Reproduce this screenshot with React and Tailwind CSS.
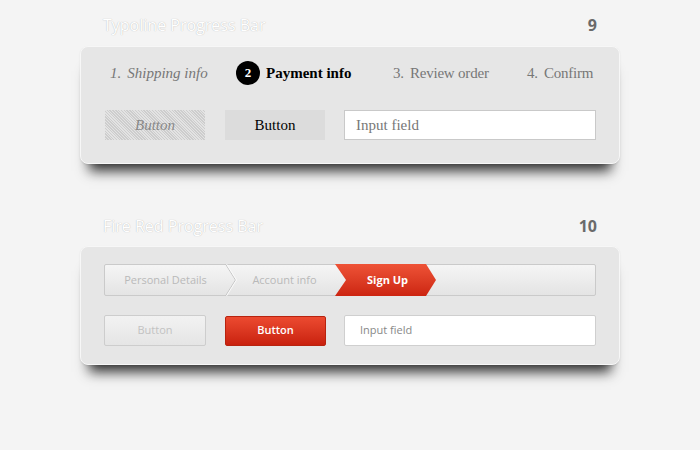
import React from "react";

const serif = "font-['Liberation_Serif',Georgia,serif]";
const sans = "font-['Open_Sans','DejaVu_Sans',sans-serif]";

function Title({ text, num }) {
  return (
    <div className={`flex items-center justify-between h-[18px] pl-[103px] pr-[103px] ${sans}`}>
      <span className="text-[16px] text-white [text-shadow:0_0_1px_rgba(0,0,0,0.3)]">{text}</span>
      <span className="text-[16px] font-bold text-[#6a6a6a]">{num}</span>
    </div>
  );
}

function Panel({ children, className = "" }) {
  return (
    <div
      className={`mx-[80px] rounded-[8px] bg-[#e6e6e6] border border-[#f7f7f7] shadow-[0_16px_12px_-9px_rgba(0,0,0,0.8),0_1px_2px_rgba(0,0,0,0.08)] ${className}`}
    >
      {children}
    </div>
  );
}

function Step({ n, label, className = "" }) {
  return (
    <span className={`flex items-baseline text-[#777] ${className}`}>
      <span className="mr-[6px]">{n}.</span>
      {label}
    </span>
  );
}

function TypolinePanel() {
  return (
    <Panel className="pt-[14px] pb-[23px]">
      <div className={`flex items-center pl-[29px] h-[24px] text-[15px] ${serif}`}>
        <Step n="1" label="Shipping info" className="w-[126px] italic" />
        <span className="w-[157px] flex items-center gap-[6px] text-black font-bold">
          <span className="w-[24px] h-[24px] rounded-full bg-black text-white text-[13px] flex items-center justify-center">
            2
          </span>
          Payment info
        </span>
        <Step n="3" label="Review order" className="w-[134px] tracking-[-0.2px]" />
        <Step n="4" label="Confirm" className="tracking-[-0.2px]" />
      </div>
      <div className={`flex items-center mt-[25px] pl-[24px] pr-[23px] ${serif}`}>
        <div className="w-[100px] h-[30px] flex items-center justify-center italic text-[15px] text-[#888] bg-[#d9d9d9] [background-image:repeating-linear-gradient(45deg,#cdcdcd_0_1px,#e3e3e3_1px_2px)]">
          Button
        </div>
        <div className="ml-[20px] w-[100px] h-[30px] flex items-center justify-center text-[15px] text-black bg-[#dcdcdc]">
          Button
        </div>
        <div className="ml-[19px] flex-1 h-[30px] flex items-center pl-[11px] bg-white border border-[#c9c9c9] text-[15px] text-[#777]">
          Input field
        </div>
      </div>
    </Panel>
  );
}

function FireRedPanel() {
  return (
    <Panel className="pt-[17px] pb-[18px]">
      <div className={`mx-[23px] ${sans}`}>
        <div className="relative flex items-center h-[32px] rounded-[2px] border border-[#cacaca] bg-gradient-to-b from-[#f5f5f5] to-[#e4e4e4] text-[11px]">
          <span className="w-[121px] text-center text-[#b9b9b9]">Personal Details</span>
          <svg className="absolute left-[120px] top-[-1px]" width="12" height="32" viewBox="0 0 12 32">
            <path d="M0.5 0 L10.5 16 L0.5 32" fill="none" stroke="#c4c4c4" strokeWidth="1" />
            <path d="M1.5 0 L11.5 16 L1.5 32" fill="none" stroke="#fafafa" strokeWidth="1" />
          </svg>
          <span className="w-[109px] text-center text-[#b9b9b9] pl-[8px]">Account info</span>
          <div className="h-[32px] -my-px w-[101px] flex items-center justify-center pl-[8px] pr-[4px] text-white font-bold bg-gradient-to-b from-[#ee5236] to-[#cc2410] [clip-path:polygon(0_0,91px_0,101px_50%,91px_100%,0_100%,11px_50%)]">
            Sign Up
          </div>
        </div>
        <div className="flex items-center mt-[19px] text-[11px]">
          <div className="w-[102px] h-[31px] flex items-center justify-center rounded-[2px] border border-[#cdcdcd] bg-gradient-to-b from-[#f2f2f2] to-[#e5e5e5] text-[#c2c2c2]">
            Button
          </div>
          <div className="ml-[19px] w-[101px] h-[30px] flex items-center justify-center rounded-[2px] border border-[#b8230f] bg-gradient-to-b from-[#ec4a30] to-[#c9200d] text-white font-semibold">
            Button
          </div>
          <div className="ml-[18px] flex-1 h-[31px] flex items-center pl-[15px] rounded-[2px] bg-white border border-[#cfcfcf] text-[#888]">
            Input field
          </div>
        </div>
      </div>
    </Panel>
  );
}

export default function App() {
  return (
    <div className="w-[700px] h-[450px] bg-[#f4f4f4] overflow-hidden pt-[16px]">
      <Title text="Typoline Progress Bar" num="9" />
      <div className="mt-[12px]">
        <TypolinePanel />
      </div>
      <div className="mt-[53px]">
        <Title text="Fire Red Progress Bar" num="10" />
      </div>
      <div className="mt-[11px]">
        <FireRedPanel />
      </div>
    </div>
  );
}
